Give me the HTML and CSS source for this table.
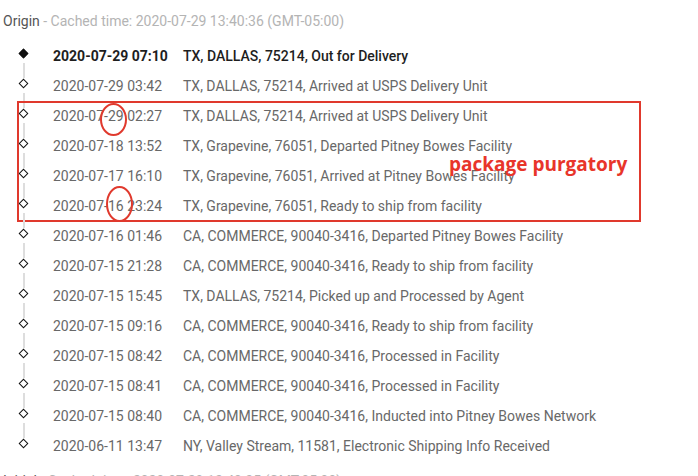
FILE: index.html
```html
<!DOCTYPE html>
<html>
<head>
<meta charset="utf-8">
<link rel="stylesheet" href="styles.css">
</head>
<body>
<div class="page">
  <div class="cache-line"><span class="src">Origin</span> - Cached time: 2020-07-29 13:40:36 (GMT-05:00)</div>
  <div class="timeline">
    <div class="row current"><div class="marker"><span class="dot"></span></div><div class="date">2020-07-29 07:10</div><div class="desc">TX, DALLAS, 75214, Out for Delivery</div></div>
    <div class="row"><div class="marker"><span class="dot"></span></div><div class="date">2020-07-29 03:42</div><div class="desc">TX, DALLAS, 75214, Arrived at USPS Delivery Unit</div></div>
    <div class="group">
      <div class="row"><div class="marker"><span class="dot"></span></div><div class="date">2020-07-29 02:27</div><div class="desc">TX, DALLAS, 75214, Arrived at USPS Delivery Unit</div></div>
      <div class="row"><div class="marker"><span class="dot"></span></div><div class="date">2020-07-18 13:52</div><div class="desc">TX, Grapevine, 76051, Departed Pitney Bowes Facility</div></div>
      <div class="row"><div class="marker"><span class="dot"></span></div><div class="date">2020-07-17 16:10</div><div class="desc">TX, Grapevine, 76051, Arrived at Pitney Bowes Facility</div></div>
      <div class="row"><div class="marker"><span class="dot"></span></div><div class="date">2020-07-16 23:24</div><div class="desc">TX, Grapevine, 76051, Ready to ship from facility</div></div>
      <span class="note">package purgatory</span>
      <span class="ring ring-a"></span>
      <span class="ring ring-b"></span>
    </div>
    <div class="row"><div class="marker"><span class="dot"></span></div><div class="date">2020-07-16 01:46</div><div class="desc">CA, COMMERCE, 90040-3416, Departed Pitney Bowes Facility</div></div>
    <div class="row"><div class="marker"><span class="dot"></span></div><div class="date">2020-07-15 21:28</div><div class="desc">CA, COMMERCE, 90040-3416, Ready to ship from facility</div></div>
    <div class="row"><div class="marker"><span class="dot"></span></div><div class="date">2020-07-15 15:45</div><div class="desc">TX, DALLAS, 75214, Picked up and Processed by Agent</div></div>
    <div class="row"><div class="marker"><span class="dot"></span></div><div class="date">2020-07-15 09:16</div><div class="desc">CA, COMMERCE, 90040-3416, Ready to ship from facility</div></div>
    <div class="row"><div class="marker"><span class="dot"></span></div><div class="date">2020-07-15 08:42</div><div class="desc">CA, COMMERCE, 90040-3416, Processed in Facility</div></div>
    <div class="row"><div class="marker"><span class="dot"></span></div><div class="date">2020-07-15 08:41</div><div class="desc">CA, COMMERCE, 90040-3416, Processed in Facility</div></div>
    <div class="row"><div class="marker"><span class="dot"></span></div><div class="date">2020-07-15 08:40</div><div class="desc">CA, COMMERCE, 90040-3416, Inducted into Pitney Bowes Network</div></div>
    <div class="row last"><div class="marker"><span class="dot"></span></div><div class="date">2020-06-11 13:47</div><div class="desc">NY, Valley Stream, 11581, Electronic Shipping Info Received</div></div>
  </div>
  <div class="cache-line bottom"><span class="src">Initial</span> - Cached time: 2020-07-29 13:40:35 (GMT-05:00)</div>
</div>
</body>
</html>
```
FILE: styles.css
```css
html, body {
  margin: 0;
  padding: 0;
  background: #ffffff;
  overflow: hidden;
}

.page {
  font-family: Roboto, "Liberation Sans", sans-serif;
  font-size: 14px;
  color: #686868;
}

.cache-line {
  padding: 11px 0 0 3px;
  line-height: 20px;
  color: #b4b4b4;
  white-space: nowrap;
}

.cache-line .src {
  color: #555555;
}

.cache-line.bottom {
  padding-top: 10px;
}

.timeline {
  margin-top: 10px;
}

.group {
  position: relative;
}

.row {
  display: flex;
  align-items: center;
  height: 30px;
  white-space: nowrap;
}

.marker {
  position: relative;
  width: 48px;
  height: 30px;
  flex: none;
}

.dot {
  position: absolute;
  left: 20px;
  top: 9px;
  width: 5px;
  height: 5px;
  border: 1.4px solid #111111;
  background: #ffffff;
  transform: rotate(45deg);
}

.marker::after {
  content: "";
  position: absolute;
  left: 23px;
  top: 22px;
  width: 2px;
  height: 15px;
  background: #dddddd;
}

.row.last .marker::after {
  display: none;
}

.current .dot {
  background: #111111;
}

.date {
  width: 130px;
  margin-left: 5px;
  flex: none;
}

.current .date,
.current .desc {
  color: #1e1e1e;
  font-weight: 500;
}

.current .date {
  font-weight: 700;
}

.group::before {
  content: "";
  position: absolute;
  left: 17px;
  top: 0;
  width: 620px;
  height: 117px;
  border: 2px solid #e0392d;
}

.note {
  position: absolute;
  left: 449px;
  top: 50px;
  font-family: "Open Sans", "Liberation Sans", sans-serif;
  font-weight: 700;
  font-size: 19px;
  line-height: 26px;
  color: #e8352a;
}

.ring {
  position: absolute;
  border: 2px solid #e0392d;
  border-radius: 50%;
}

.ring-a {
  left: 100px;
  top: 2px;
  width: 23px;
  height: 29px;
}

.ring-b {
  left: 106px;
  top: 85px;
  width: 23px;
  height: 32px;
}
```
